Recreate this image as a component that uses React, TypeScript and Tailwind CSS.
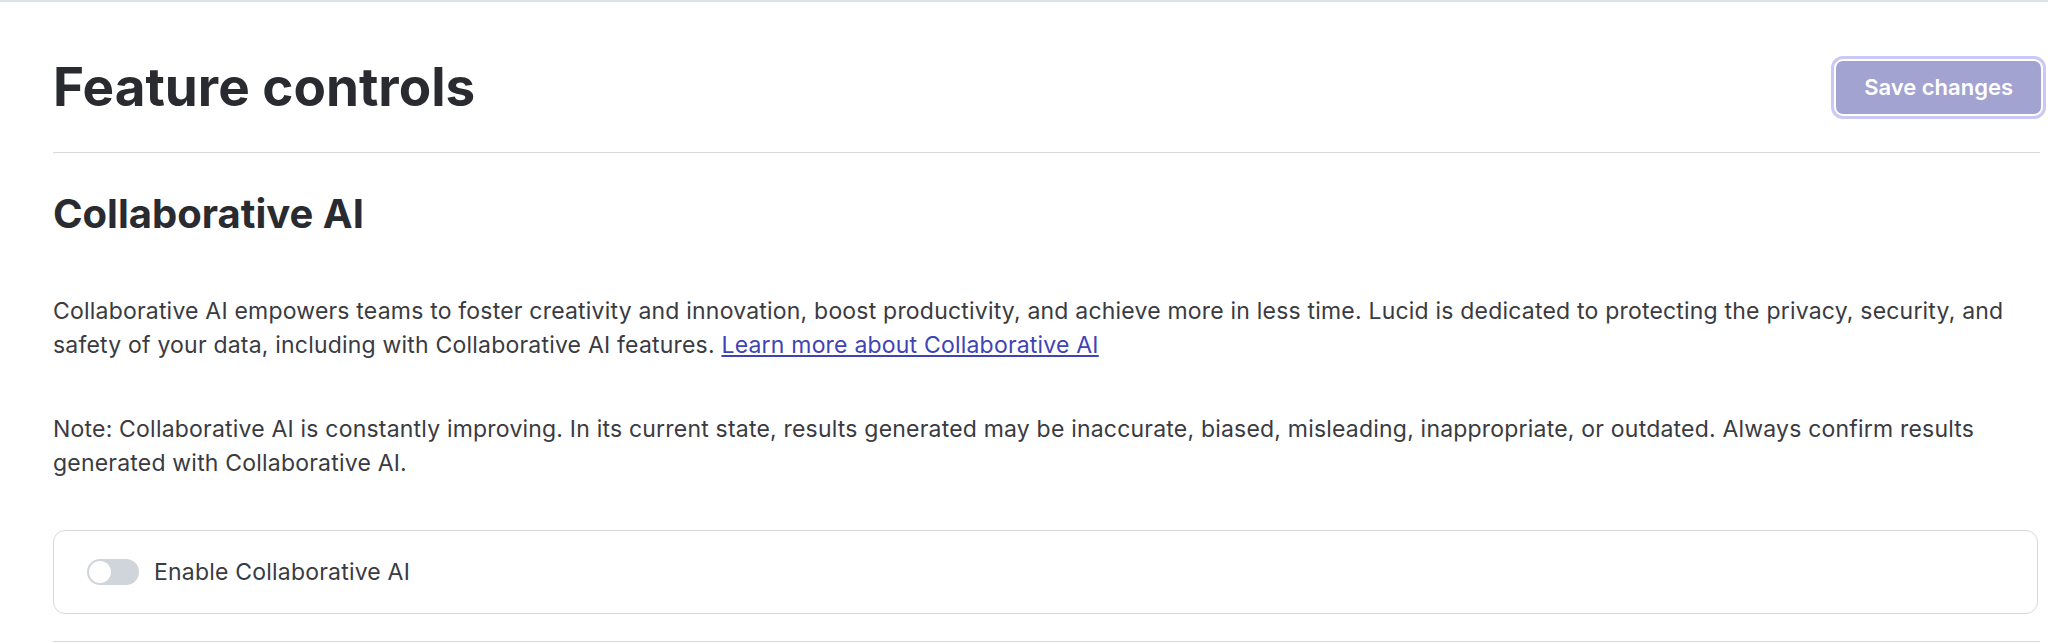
export default function App() {
  return (
    <div className="min-h-screen w-full border-t-2 border-[#dce2ea] bg-white font-['Inter',sans-serif] text-[#3a3b42]">
      <div className="pl-[53px] pr-[8px] pt-[59px]">
        <div className="flex h-[53px] items-center justify-between">
          <h1 className="text-[53px] leading-none font-bold text-[#2a2b31]">Feature controls</h1>
          <button
            disabled
            className="mr-[-1px] h-[53px] rounded-[7px] bg-[#a3a3d2] px-[28px] text-[22px] font-semibold text-white ring-3 ring-[#c9c8f6] ring-offset-2"
          >
            Save changes
          </button>
        </div>
        <div className="h-[39px] border-b border-[#d5d8dd]" />

        <h2 className="mt-[41px] text-[40px] leading-none font-bold text-[#2a2b31]">Collaborative AI</h2>

        <p className="mt-[60px] text-[23px] leading-[34px] tracking-[0.2px]">
          Collaborative AI empowers teams to foster creativity and innovation, boost productivity, and achieve more in
          less time. Lucid is dedicated to protecting the privacy, security, and
          <br />
          safety of your data, including with Collaborative AI features.{" "}
          <a href="#" className="text-[#3f43b6] underline underline-offset-2">
            Learn more about Collaborative AI
          </a>
        </p>

        <p className="mt-[50px] text-[23px] leading-[34px] tracking-[0.2px]">
          Note: Collaborative AI is constantly improving. In its current state, results generated may be inaccurate,
          biased, misleading, inappropriate, or outdated. Always confirm results
          <br />
          generated with Collaborative AI.
        </p>

        <div className="mt-[50px] mr-[2px] flex h-[84px] items-center gap-[15px] rounded-[12px] border border-[#d5d8dd] pl-[33px]">
          <span className="relative inline-flex h-[26px] w-[52px] items-center rounded-full bg-[#d0d5dc]">
            <span className="ml-[2px] h-[22px] w-[22px] rounded-full bg-white" />
          </span>
          <span className="text-[23px] leading-none tracking-[0.2px]">Enable Collaborative AI</span>
        </div>

        <div className="mt-[27px] border-b border-[#d5d8dd]" />
      </div>
    </div>
  );
}
